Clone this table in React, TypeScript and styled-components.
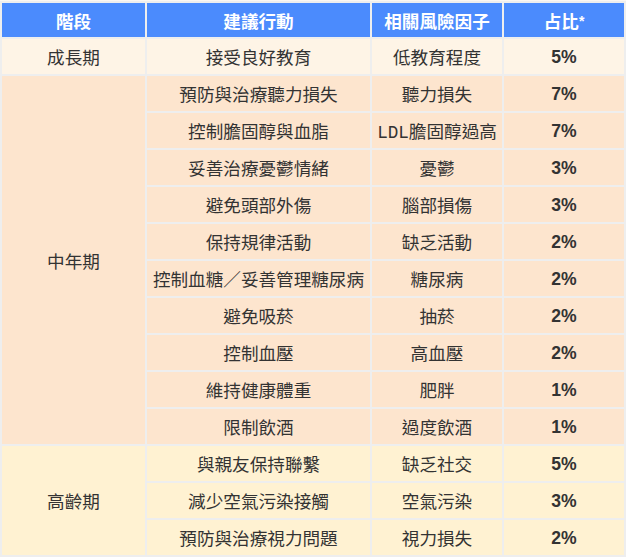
import React from 'react';
import styled, { createGlobalStyle } from 'styled-components';

const GlobalStyle = createGlobalStyle`
  body {
    margin: 0;
    background: #fbf7f1;
    font-family: "Liberation Sans", "Noto Sans CJK TC", sans-serif;
  }
`;

const Table = styled.table`
  margin-top: 1px;
  border-collapse: separate;
  border-spacing: 2px;
  background: #eeeeee;
  table-layout: fixed;
  width: 626px;
`;

const HeadCell = styled.th<{ w: number }>`
  width: ${(p) => p.w}px;
  height: 34px;
  padding: 0;
  background: #4b8bfd;
  color: #ffffff;
  font-size: 17.6px;
  font-weight: 700;
  text-align: center;
  vertical-align: middle;
`;

const Star = styled.span`
  font-size: 14px;
  vertical-align: 2px;
`;

const Mono = styled.span`
  font-family: "Liberation Mono", monospace;
`;

type Tone = 'early' | 'mid' | 'late';

const tones: Record<Tone, string> = {
  early: '#fef4e6',
  mid: '#fde5ce',
  late: '#fff2d2',
};

const Cell = styled.td<{ tone: Tone; bold?: boolean }>`
  height: 35px;
  padding: ${(p) => (p.bold ? '2px 0 0' : '0')};
  box-sizing: border-box;
  background: ${(p) => tones[p.tone]};
  color: #333333;
  font-size: 17.6px;
  font-weight: ${(p) => (p.bold ? 700 : 400)};
  text-align: center;
  vertical-align: middle;
  white-space: nowrap;
`;

interface IRow {
  action: string
  factor: React.ReactNode
  pct: string
}

interface IStage {
  name: string
  tone: Tone
  rows: IRow[]
}

const stages: IStage[] = [
  {
    name: '成長期',
    tone: 'early',
    rows: [{ action: '接受良好教育', factor: '低教育程度', pct: '5%' }],
  },
  {
    name: '中年期',
    tone: 'mid',
    rows: [
      { action: '預防與治療聽力損失', factor: '聽力損失', pct: '7%' },
      {
        action: '控制膽固醇與血脂',
        factor: (
          <>
            <Mono>LDL</Mono>
            膽固醇過高
          </>
        ),
        pct: '7%',
      },
      { action: '妥善治療憂鬱情緒', factor: '憂鬱', pct: '3%' },
      { action: '避免頭部外傷', factor: '腦部損傷', pct: '3%' },
      { action: '保持規律活動', factor: '缺乏活動', pct: '2%' },
      { action: '控制血糖／妥善管理糖尿病', factor: '糖尿病', pct: '2%' },
      { action: '避免吸菸', factor: '抽菸', pct: '2%' },
      { action: '控制血壓', factor: '高血壓', pct: '2%' },
      { action: '維持健康體重', factor: '肥胖', pct: '1%' },
      { action: '限制飲酒', factor: '過度飲酒', pct: '1%' },
    ],
  },
  {
    name: '高齡期',
    tone: 'late',
    rows: [
      { action: '與親友保持聯繫', factor: '缺乏社交', pct: '5%' },
      { action: '減少空氣污染接觸', factor: '空氣污染', pct: '3%' },
      { action: '預防與治療視力問題', factor: '視力損失', pct: '2%' },
    ],
  },
];

const App: React.FC = () => (
  <>
    <GlobalStyle />
    <Table>
      <thead>
        <tr>
          <HeadCell w={143}>階段</HeadCell>
          <HeadCell w={223}>建議行動</HeadCell>
          <HeadCell w={130}>相關風險因子</HeadCell>
          <HeadCell w={120}>
            占比
            <Star>*</Star>
          </HeadCell>
        </tr>
      </thead>
      <tbody>
        {stages.map((stage) => stage.rows.map((row, i) => (
          <tr key={row.action}>
            {i === 0 && (
              <Cell tone={stage.tone} rowSpan={stage.rows.length}>
                {stage.name}
              </Cell>
            )}
            <Cell tone={stage.tone}>{row.action}</Cell>
            <Cell tone={stage.tone}>{row.factor}</Cell>
            <Cell tone={stage.tone} bold>{row.pct}</Cell>
          </tr>
        )))}
      </tbody>
    </Table>
  </>
);

export default App;
